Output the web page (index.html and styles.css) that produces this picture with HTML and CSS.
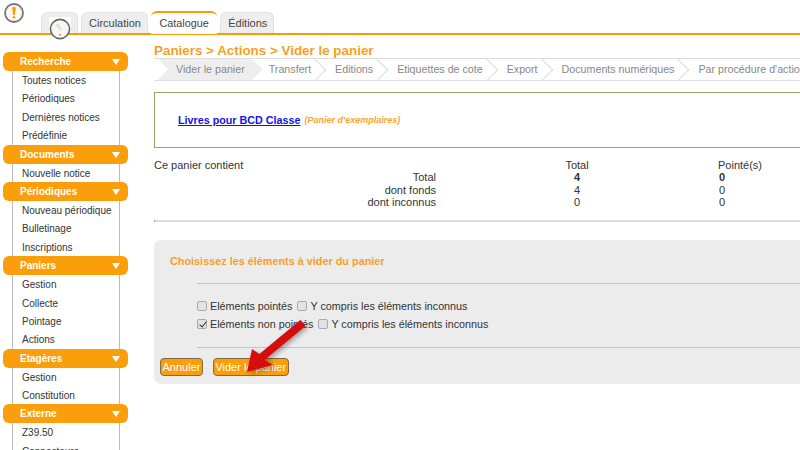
FILE: index.html
```html
<!DOCTYPE html>
<html lang="fr">
<head>
<meta charset="utf-8">
<title>Vider le panier</title>
<link rel="stylesheet" href="styles.css">
</head>
<body>
<header class="topbar">
  <svg class="logo" width="22" height="22" viewBox="0 0 22 22"><circle cx="11" cy="11" r="9" fill="#fdf8ee" stroke="#777" stroke-width="1.8"/><path d="M9.2 6.5a1.8 1.8 0 0 1 3.6 0L11.8 13h-1.6z" fill="#f59c12"/><circle cx="11" cy="15.3" r="1.2" fill="#f59c12"/></svg>
  <nav class="tabs">
    <a class="tab tab-home"><span class="home-bg"></span></a>
    <a class="tab">Circulation</a>
    <a class="tab tab-active">Catalogue</a>
    <a class="tab">Éditions</a>
  </nav>
  <svg class="home-icon" width="24" height="24" viewBox="0 0 24 24"><circle cx="12" cy="12" r="9.6" fill="#f7f7f5" stroke="#666" stroke-width="1.6"/><path d="M7.5 8.5a2 2 0 0 1 3.2-1.5l3.6 5.5-2 1.2z" fill="#e2e2e0"/><circle cx="12" cy="17.8" r="1.1" fill="#f59c12"/></svg>
</header>
<div class="layout">
  <aside class="sidebar">
    <section class="group">
      <h3 class="group-title">Recherche</h3>
      <ul class="group-list"><li>Toutes notices</li><li>Périodiques</li><li>Dernières notices</li><li>Prédéfinie</li></ul>
    </section>
    <section class="group">
      <h3 class="group-title">Documents</h3>
      <ul class="group-list"><li>Nouvelle notice</li></ul>
    </section>
    <section class="group">
      <h3 class="group-title">Périodiques</h3>
      <ul class="group-list"><li>Nouveau périodique</li><li>Bulletinage</li><li>Inscriptions</li></ul>
    </section>
    <section class="group">
      <h3 class="group-title">Paniers</h3>
      <ul class="group-list"><li>Gestion</li><li>Collecte</li><li>Pointage</li><li>Actions</li></ul>
    </section>
    <section class="group">
      <h3 class="group-title">Etagères</h3>
      <ul class="group-list"><li>Gestion</li><li>Constitution</li></ul>
    </section>
    <section class="group">
      <h3 class="group-title">Externe</h3>
      <ul class="group-list"><li>Z39.50</li><li>Connecteurs</li></ul>
    </section>
  </aside>
  <main class="main">
    <h1 class="page-title">Paniers &gt; Actions &gt; Vider le panier</h1>
    <ol class="steps">
      <li class="step step-current">Vider le panier</li>
      <li class="step">Transfert</li>
      <li class="step">Editions</li>
      <li class="step">Etiquettes de cote</li>
      <li class="step">Export</li>
      <li class="step">Documents numériques</li>
      <li class="step">Par procédure d'action</li>
    </ol>
    <div class="cart-box">
      <a class="cart-link" href="#">Livres pour BCD Classe</a>
      <em class="cart-type">(Panier d'exemplaires)</em>
    </div>
    <div class="stats">
      <div>Ce panier contient</div><div class="num">Total</div><div>Pointé(s)</div>
      <div class="lab">Total</div><div class="num"><b>4</b></div><div class="ptd"><b>0</b></div>
      <div class="lab">dont fonds</div><div class="num">4</div><div class="ptd">0</div>
      <div class="lab">dont inconnus</div><div class="num">0</div><div class="ptd">0</div>
    </div>
    <div class="rule"></div>
    <form class="panel">
      <h3 class="panel-title">Choisissez les éléments à vider du panier</h3>
      <hr class="panel-rule">
      <div class="options">
        <div class="opt-row">
          <label class="opt"><input type="checkbox">Eléments pointés</label>
          <label class="opt"><input type="checkbox">Y compris les éléments inconnus</label>
        </div>
        <div class="opt-row">
          <label class="opt"><input type="checkbox" checked>Eléments non pointés</label>
          <label class="opt"><input type="checkbox">Y compris les éléments inconnus</label>
        </div>
      </div>
      <hr class="panel-rule">
      <div class="actions">
        <button type="button" class="btn">Annuler</button>
        <button type="button" class="btn">Vider le panier</button>
      </div>
    </form>
  </main>
</div>
<svg class="arrow" width="90" height="80" viewBox="0 0 90 80"><defs><filter id="s" x="-30%" y="-30%" width="160%" height="160%"><feDropShadow dx="2" dy="2" stdDeviation="2.5" flood-color="#000" flood-opacity=".35"/></filter></defs><path d="M61.4 2 L66.6 8 L25.6 42 L34 47 L8 54 L13 31 L20.4 36 Z" fill="#d40d0d" filter="url(#s)"/></svg>
</body>
</html>
```
FILE: styles.css
```css
* { box-sizing: border-box; }
html, body { margin: 0; padding: 0; width: 800px; height: 450px; overflow: hidden; background: #fff; }
body { font-family: "Liberation Sans", Arial, sans-serif; font-size: 11px; color: #333; position: relative; }

.topbar { height: 35px; border-bottom: 2px solid #f90; display: flex; align-items: flex-end; position: relative; }
.logo { position: absolute; left: 3px; top: 2px; }
.home-icon { position: absolute; left: 48px; top: 17px; }
.tabs { display: flex; gap: 3px; margin-left: 41px; height: 22px; margin-bottom: -1px; }
.tab { display: block; height: 21px; padding: 0 6px 0 7px; line-height: 21px; background: #eee; border: 1px solid #e2e2e2; border-bottom: 0; border-radius: 6px 6px 0 0; color: #444; font-size: 11px; }
.tab-home { width: 37px; position: relative; }
.home-bg { position: absolute; left: 7px; top: 4px; width: 22px; height: 16px; background: #fff; }
.tab-active { background: #fff; border: 0; border-top: 2px solid #f90; height: 23px; margin-top: -1px; padding: 0 8.5px; line-height: 21px; font-size: 10.8px; position: relative; }

.layout { display: grid; grid-template-columns: 154px 800px; }
.sidebar { padding: 17px 0 0 3px; width: 128px; }
.group-title { margin: 0; height: 19px; line-height: 20px; padding-left: 17px; background: #fb9e0c; border-radius: 6px; color: #fff; font-size: 10px; font-weight: bold; position: relative; }
.group-title::after { content: ""; position: absolute; right: 8px; top: 7px; border: 4px solid transparent; border-top: 6px solid #fff; border-bottom: 0; }
.group-list { list-style: none; margin: 0 0 0 9px; width: 108px; padding: 0; border-left: 1px solid #bbb; border-right: 1px solid #bbb; }
.group-list li { height: 18.4px; line-height: 20.4px; padding-left: 9px; font-size: 10px; color: #333; white-space: nowrap; }

.main { padding-top: 8px; }
.page-title { margin: 0; font-size: 13.4px; line-height: 15px; color: #fb9e1e; font-weight: bold; }
.steps { list-style: none; margin: 0; padding: 0 0 0 4px; height: 23px; display: flex; border-top: 1px solid #ddd; border-bottom: 1px solid #ddd; white-space: nowrap; }
.step { position: relative; padding: 0 0 0 24px; line-height: 21px; font-size: 10.7px; color: #888; }
.step::after { content: ""; position: absolute; right: -12px; top: 3px; width: 15px; height: 15px; border-top: 1px solid #ddd; border-right: 1px solid #ddd; transform: rotate(45deg); }
.step-current { padding: 0 18px; background: #eee; clip-path: polygon(0 0, calc(100% - 11px) 0, 100% 50%, calc(100% - 11px) 100%, 0 100%, 10px 50%); }
.step-current::after { display: none; }
.step-current + .step { margin-left: -18px; }

.cart-box { margin-top: 11px; height: 56px; border: 1px solid #8aa866; border-right: 0; padding-left: 23px; display: flex; align-items: center; gap: 4px; }
.cart-link { color: #11e; font-weight: bold; font-size: 10.75px; }
.cart-type { color: #fba333; font-size: 9px; font-weight: bold; }

.stats { margin-top: 10.5px; display: grid; grid-template-columns: 282px 282px 200px; grid-auto-rows: 12.5px; line-height: 12.5px; font-size: 11px; }
.num { text-align: center; }
.lab { text-align: right; }
.ptd { padding-left: 1px; }
.rule { margin-top: 11px; height: 2px; background: #ddd; border-left: 1px solid #999; }

.panel { margin-top: 18.5px; height: 144px; background: #ececec; border-radius: 7px; padding: 15px 0 0 6px; position: relative; }
.panel-title { margin: 0 0 0 10px; font-size: 10.85px; line-height: 13px; color: #fb9e1e; font-weight: bold; }
.panel-rule { margin: 0 0 0 37px; border: 0; height: 1px; background: #c6c6c6; }
.panel-title + .panel-rule { margin-top: 15px; }
.options { padding: 13px 0 14px 37px; }
.opt-row { display: flex; height: 18px; align-items: center; gap: 5px; }
.opt { display: flex; align-items: center; font-size: 10.75px; color: #333; }
.opt input { appearance: none; width: 10px; height: 10px; margin: 0 3px 0 0; border: 1px solid #aaa; border-radius: 2px; background: #e2e2e2; position: relative; }
.opt input:checked::after { content: ""; position: absolute; left: 2.5px; top: 0; width: 3px; height: 6px; border: solid #333; border-width: 0 1.5px 1.5px 0; transform: rotate(40deg); }
.actions { display: flex; gap: 10px; margin-top: 10px; }
.btn { height: 18px; padding: 0 1.5px; background: #fb9e0c; border: 1px solid #7c6a4a; border-radius: 4px; color: #fff; font: 11px "Liberation Sans", Arial, sans-serif; }

.arrow { position: absolute; left: 239px; top: 318px; }
```
